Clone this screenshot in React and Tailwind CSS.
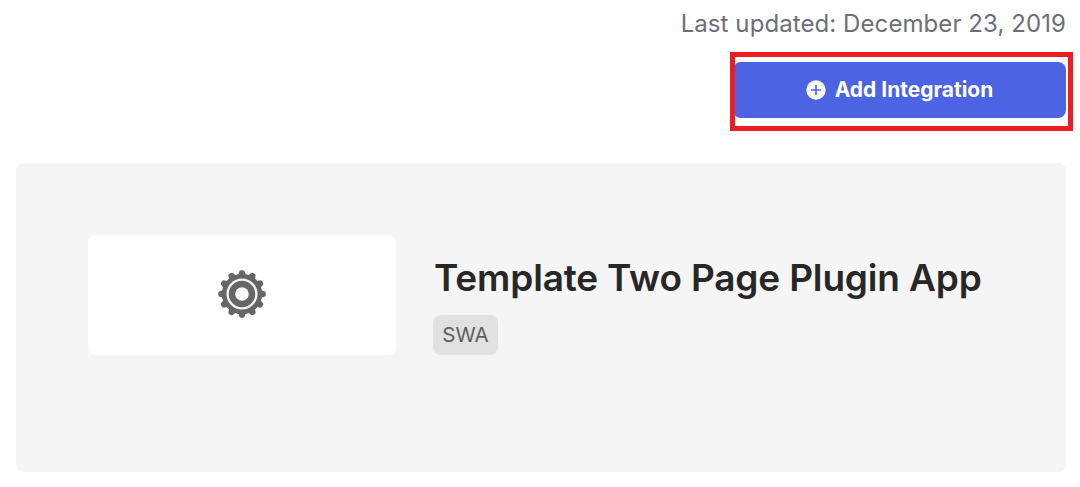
const TEETH = Array.from({ length: 12 }, (_, i) => i * 30);

function GearIcon() {
  return (
    <svg className="mb-0.5 h-12 w-12" viewBox="0 0 48 48" fill="none" aria-hidden="true">
      <g fill="#666666">
        {TEETH.map((angle) => (
          <path key={angle} d="M18.4 8Q20.6 4.6 21 2.4Q21.3 0.2 23.2 0.2H24.8Q26.7 0.2 27 2.4Q27.4 4.6 29.6 8Z" transform={`rotate(${angle} 24 24)`} />
        ))}
        <circle cx="24" cy="24" r="20.2" />
      </g>
      <circle cx="24" cy="24" r="14.4" stroke="#f4f4f4" strokeWidth="2.3" />
      <circle cx="24" cy="24" r="6.8" fill="#fff" />
    </svg>
  );
}

function PlusCircleIcon() {
  return (
    <svg className="h-5 w-5" viewBox="0 0 20 20" aria-hidden="true">
      <circle cx="10" cy="10" r="9.7" fill="#fff" />
      <path d="M10 5v10M5 10h10" stroke="#4c63e2" strokeWidth="1.6" />
    </svg>
  );
}

function AddButton() {
  return (
    <div className="mt-2.5 -mr-[7px] h-[79px] w-[343px] border-[5px] border-[#ee1c25] pt-[5px] pr-0.5">
      <button className="-ml-0.5 flex h-14 w-[333px] items-center justify-center rounded-lg bg-[#4c63e2] text-[21px] font-bold text-white [clip-path:inset(0_0_0_2px)]">
        <PlusCircleIcon />
        <span className="mb-px ml-[9px] whitespace-nowrap">Add Integration</span>
      </button>
    </div>
  );
}

function IntegrationCard() {
  return (
    <section className="mt-8 flex h-[309px] rounded-lg bg-[#f5f5f5] pt-[72px] pl-[72px]">
      <div className="flex h-[120px] w-[308px] items-center justify-center rounded-lg bg-white">
        <GearIcon />
      </div>
      <div className="ml-[37px] pt-5">
        <h1 className="ml-px text-[37px] leading-[46px] font-semibold tracking-[-0.17px] whitespace-nowrap text-[#272727]">
          Template Two Page Plugin App
        </h1>
        <span className="mt-3.5 flex h-10 w-[65px] items-center justify-center rounded-lg bg-[#e1e1e1] text-[20.5px] text-[#5e5e5e]">
          SWA
        </span>
      </div>
    </section>
  );
}

export default function App() {
  return (
    <main className="h-[487px] w-[1080px] overflow-hidden bg-white pr-3.5 pl-4 font-['Inter',sans-serif]">
      <header className="flex flex-col items-end pt-1.5">
        <p className="text-2xl leading-9 tracking-[0.08px] whitespace-nowrap text-[#6e6e78]">
          Last updated: December 23, 2019
        </p>
        <AddButton />
      </header>
      <IntegrationCard />
    </main>
  );
}
